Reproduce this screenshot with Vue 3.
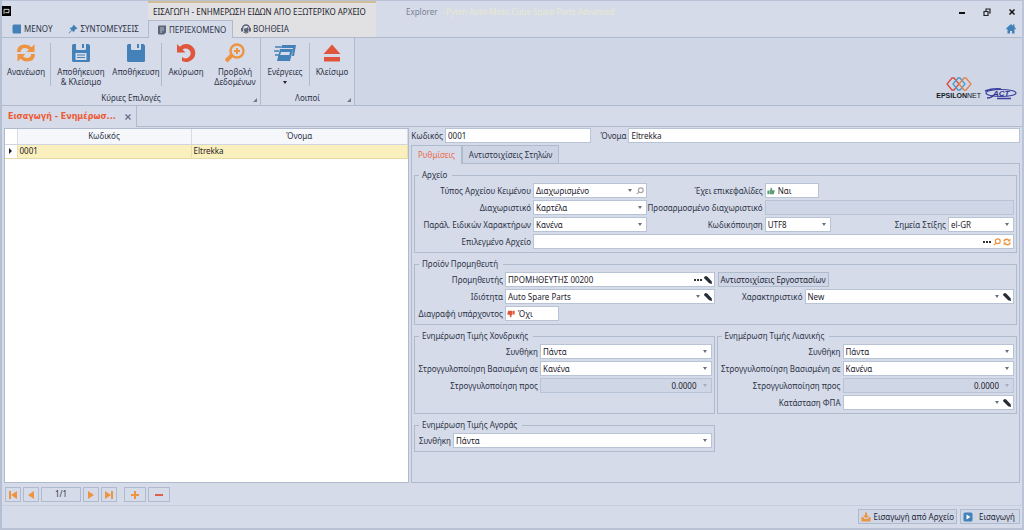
<script setup>
import { h, reactive } from 'vue'

const paths = {
  refresh: ['M1 9Q1 1.500 9 1.500Q13 1.500 15.500 4.200L18.500 1.200V9H10.500L13 6.700Q11.500 5 9 5Q5 5 4.800 9z', 'M19 11Q19 18.500 11 18.500Q7 18.500 4.500 15.800L1.500 18.800V11H9.500L7 13.300Q8.500 15 11 15Q15 15 15.200 11z'],
  disk: ['M1 2.500Q1 1 2.500 1H5v5q0 1 1 1h8q1 0 1-1V1h2.500L19 2.500v15q0 1.500-1.500 1.500h-15Q1 19 1 17.500z', 'M11 1h2v4h-2z'],
  undo: ['M1 1l2.800 2.800A9 9 0 1 1 6 18v-4.200A5 5 0 1 0 6.500 6.500L9.500 9.500H1z'],
  eject: ['M10 1.500l8.500 9.500H1.500z', 'M2 14h16v4.500H2z'],
  home: ['M10 0l10 9-1.500 2L17 9.800V19h-5v-5H8v5H3V9.800L1.500 11 0 9z', 'M14 1h3v5h-3z'],
  pin: ['M11 1l8 8-3 1-3 3-1 4-4-4-6 6-1-1 6-6-4-4 4-1 3-3z'],
  book: ['M4 1h14v18H4q-3 0-3-3V4q0-3 3-3z'],
  pencil: ['M4 0L8 1 19 13l1 7-7-2L1 6 0 3z'],
  thumb: ['M1 9h4v9H1z', 'M6 9l3-3V2q3-1 4 2v4h6v3l-2 7H6z']
}

const Ico = (props) =>
  h('svg', { viewBox: '0 0 20 20', class: 'ico', 'aria-hidden': 'true' },
    paths[props.name].map((d) => h('path', { d, fill: 'currentColor' })))
Ico.props = ['name']

const form = reactive({
  code: '0001',
  name: 'Eltrekka',
  headers: 'Ναι',
  separator: '',
  file: '',
  supplier: 'ΠΡΟΜΗΘΕΥΤΗΣ 00200',
  remove: 'Όχι',
  rounding: '0.0000'
})
</script>

<template>
  <div class="window">
    <header class="top">
      <div class="top-left">
        <div class="title-row">
          <span class="app-icon"><svg viewBox="0 0 11 11"><path d="M2.500 9V3.500h6v4H4" fill="none" stroke="#fff" /></svg></span>
        </div>
        <nav class="tabs first">
          <button class="rtab"><Ico name="book" class="blue" />ΜΕΝΟΥ</button>
          <button class="rtab"><Ico name="pin" class="blue" />ΣΥΝΤΟΜΕΥΣΕΙΣ</button>
        </nav>
      </div>
      <div class="context">
        <div class="title-row ctx-title">ΕΙΣΑΓΩΓΗ - ΕΝΗΜΕΡΩΣΗ ΕΙΔΩΝ ΑΠΟ ΕΞΩΤΕΡΙΚΟ ΑΡΧΕΙΟ</div>
        <nav class="tabs">
          <button class="rtab active">
            <svg class="ico grey" viewBox="0 0 20 20"><path d="M4 1h14v14l-4 4H4q-2 0-2-2V3q0-2 2-2z" fill="currentColor" /><path d="M6 6h8M6 10h8M6 14h4" stroke="#d5dbe9" stroke-width="1.500" /></svg>ΠΕΡΙΕΧΟΜΕΝΟ
          </button>
          <button class="rtab">
            <svg class="ico grey" viewBox="0 0 20 20"><path d="M3 12V9a7 7 0 0 1 14 0v3" fill="none" stroke="currentColor" stroke-width="3" /><path d="M0 8h4v7H0zM16 8h4v7h-4zM6 9q4 1 7-3l2 4v4q-5 6-9 0z" fill="currentColor" /><path d="M5 16q5 5 10 0" fill="none" stroke="currentColor" stroke-width="2" /></svg>ΒΟΗΘΕΙΑ
          </button>
        </nav>
      </div>
      <div class="top-right">
        <div class="title-row app-title">
          <span class="explorer">Explorer</span><span class="product">- Pylon Auto-Moto Cube Spare Parts Advanced</span>
          <span class="wbtns">
            <button aria-label="Ελαχιστοποίηση"><svg viewBox="0 0 8 8"><path d="M1 5h6" stroke="#111" stroke-width="2" /></svg></button>
            <button aria-label="Επαναφορά"><svg viewBox="0 0 8 8"><path d="M3 3V1h4v4H6M1 3.500h4v4H1z" fill="none" stroke="#222" stroke-width="1.200" /></svg></button>
            <button aria-label="Κλείσιμο παραθύρου"><svg viewBox="0 0 8 8"><path d="M1.500 1.500l5 5m0-5l-5 5" stroke="#111" stroke-width="1.500" /></svg></button>
          </span>
        </div>
        <div class="home"><button aria-label="Αρχική"><Ico name="home" class="blue" /></button></div>
      </div>
    </header>

    <section class="ribbon">
      <div class="group">
        <div class="tools">
          <button class="tool w48"><Ico name="refresh" class="orange" /><span>Ανανέωση</span></button>
          <i class="sep"></i>
          <button class="tool w60">
            <svg class="ico blue" viewBox="0 0 20 20"><path d="M1 2.500Q1 1 2.500 1H5v5q0 1 1 1h8q1 0 1-1V1h2.500L19 2.500v15q0 1.500-1.500 1.500h-15Q1 19 1 17.500z" fill="currentColor" /><path d="M11 1h2v4h-2z" fill="currentColor" /><path d="M4.500 10h11v7h-11z" fill="#d5dbe9" /><path d="M6 12h8M6 14.500h8" stroke="currentColor" /></svg>
            <span>Αποθήκευση<br />&amp; Κλείσιμο</span>
          </button>
          <button class="tool w50"><Ico name="disk" class="blue" /><span>Αποθήκευση</span></button>
          <i class="sep"></i>
          <button class="tool w48"><Ico name="undo" class="red" /><span>Ακύρωση</span></button>
          <button class="tool w50">
            <svg class="ico orange" viewBox="0 0 20 20"><circle cx="12" cy="8" r="6.500" fill="none" stroke="currentColor" stroke-width="2.400" /><path d="M12 5v6M9 8h6" stroke="currentColor" stroke-width="2" /><path d="M7 12l-6 6" stroke="currentColor" stroke-width="4" /></svg>
            <span>Προβολή<br />Δεδομένων</span>
          </button>
        </div>
        <div class="caption">Κύριες Επιλογές<i class="corner"></i></div>
      </div>
      <div class="group">
        <div class="tools">
          <button class="tool w48">
            <svg class="ico blue wide" viewBox="0 0 22 20"><path d="M8 2h14l-2 11h-2l1-8H7z" fill="currentColor" /><path d="M6 6h13l-3 12H3z" fill="currentColor" /><path d="M7 9h9l-.800 3h-9z" fill="#d5dbe9" /><path d="M1 4h6M0 8h5M1 12h4" stroke="currentColor" stroke-width="1.500" /></svg>
            <span>Ενέργειες</span><i class="arrow dark"></i>
          </button>
          <i class="sep"></i>
          <button class="tool w44"><Ico name="eject" class="red" /><span>Κλείσιμο</span></button>
        </div>
        <div class="caption">Λοιποί<i class="corner"></i></div>
      </div>
      <div class="brands">
        <div class="epsilon">
          <svg viewBox="0 0 28 14"><g fill="none" stroke-width="1.300"><path d="M7 1h2l5 6-5 6H7L2 7z" stroke="#d94b3c" /><path d="M13 1h2l5 6-5 6h-2L8 7z" stroke="#4a9bd0" /><path d="M19 1h2l5 6-5 6h-2l-5-6z" stroke="#e5824a" /></g></svg>
          <span class="ename"><b>EPSILON</b>NET</span>
        </div>
        <div class="act">
          <svg viewBox="0 0 34 12"><ellipse cx="17" cy="5" rx="15" ry="3.500" fill="none" stroke="#3b3f9e" stroke-width="1.200" /><path d="M1 3q8-3 16-2M3 10q4 0 7-3M13 10.500h14" fill="none" stroke="#3b3f9e" stroke-width="1.500" /></svg>
          <span>ACT</span>
        </div>
      </div>
    </section>

    <nav class="doctabs">
      <div class="doctab"><a href="#">Εισαγωγή - Ενημέρωσ...</a><button aria-label="Κλείσιμο καρτέλας"><svg viewBox="0 0 8 8"><path d="M1.500 1.500l5 5m0-5l-5 5" stroke="#667089" stroke-width="1.300" /></svg></button></div>
      <div class="docrest"></div>
    </nav>

    <main class="content">
      <section class="list">
        <table>
          <thead><tr><th class="mark"></th><th class="code">Κωδικός</th><th>Όνομα</th></tr></thead>
          <tbody><tr><td class="mark"><i class="pointer"></i></td><td>0001</td><td>Eltrekka</td></tr></tbody>
        </table>
      </section>

      <form class="detail" @submit.prevent>
        <div class="ident">
          <label for="code">Κωδικός</label><div class="field"><input id="code" v-model="form.code" /></div>
          <label for="name">Όνομα</label><div class="field"><input id="name" v-model="form.name" /></div>
        </div>
        <div class="subtabs">
          <button type="button" class="subtab on">Ρυθμίσεις</button><button type="button" class="subtab">Αντιστοιχίσεις Στηλών</button><i></i>
        </div>
        <div class="panel">
          <fieldset>
            <legend>Αρχείο</legend>
            <div class="grid file">
              <label for="type">Τύπος Αρχείου Κειμένου</label>
              <div class="field"><select id="type"><option>Διαχωρισμένο</option></select><i class="arrow"></i><svg class="mini lens pale" viewBox="0 0 10 10"><circle cx="6" cy="4" r="3" /><path d="M4 6L1 9" /></svg></div>
              <label for="headers">Έχει επικεφαλίδες</label>
              <div class="field bool"><Ico name="thumb" class="mini green" /><input id="headers" v-model="form.headers" /></div>

              <label for="delimiter">Διαχωριστικό</label>
              <div class="field"><select id="delimiter"><option>Καρτέλα</option></select><i class="arrow"></i></div>
              <label for="custom">Προσαρμοσμένο διαχωριστικό</label>
              <div class="field off"><input id="custom" v-model="form.separator" disabled /></div>

              <label for="special">Παράλ. Ειδικών Χαρακτήρων</label>
              <div class="field"><select id="special"><option>Κανένα</option></select><i class="arrow"></i></div>
              <label for="encoding">Κωδικόποιηση</label>
              <div class="pair">
                <div class="field short"><select id="encoding"><option>UTF8</option></select><i class="arrow"></i></div>
                <label for="culture">Σημεία Στίξης</label>
                <div class="field short"><select id="culture"><option>el-GR</option></select><i class="arrow"></i></div>
              </div>

              <label for="file">Επιλεγμένο Αρχείο</label>
              <div class="field span">
                <input id="file" v-model="form.file" />
                <button type="button" class="inbtn" aria-label="Επιλογή αρχείου"><i class="dots"></i></button>
                <button type="button" class="inbtn" aria-label="Προβολή"><svg class="mini lens orange" viewBox="0 0 10 10"><circle cx="6" cy="4" r="3" /><path d="M4 6L1 9" /></svg></button>
                <button type="button" class="inbtn" aria-label="Ανανέωση αρχείου"><Ico name="refresh" class="mini orange" /></button>
              </div>
            </div>
          </fieldset>

          <fieldset>
            <legend>Προϊόν Προμηθευτή</legend>
            <div class="grid product-grid">
              <label for="supplier">Προμηθευτής</label>
              <div class="field"><input id="supplier" v-model="form.supplier" /><button type="button" class="inbtn" aria-label="Επιλογή"><i class="dots"></i></button><button type="button" class="inbtn" aria-label="Επεξεργασία"><Ico name="pencil" class="mini dark" /></button></div>
              <button type="button" class="plain factories">Αντιστοιχίσεις Εργοστασίων</button>

              <label for="property">Ιδιότητα</label>
              <div class="field"><select id="property"><option>Auto Spare Parts</option></select><i class="arrow"></i><Ico name="pencil" class="mini dark" /></div>
              <label for="feature">Χαρακτηριστικό</label>
              <div class="field"><select id="feature"><option>New</option></select><i class="arrow"></i><Ico name="pencil" class="mini dark" /></div>

              <label for="remove">Διαγραφή υπάρχοντος</label>
              <div class="field bool"><Ico name="thumb" class="mini red down" /><input id="remove" v-model="form.remove" /></div>
            </div>
          </fieldset>

          <div class="prices">
            <fieldset>
              <legend>Ενημέρωση Τιμής Χονδρικής</legend>
              <div class="grid price">
                <label for="w1">Συνθήκη</label><div class="field"><select id="w1"><option>Πάντα</option></select><i class="arrow"></i></div>
                <label for="w2">Στρογγυλοποίηση Βασισμένη σε</label><div class="field"><select id="w2"><option>Κανένα</option></select><i class="arrow"></i></div>
                <label for="w3">Στρογγυλοποίηση προς</label><div class="field off"><input id="w3" class="num" v-model="form.rounding" disabled /><i class="arrow faint"></i></div>
              </div>
            </fieldset>
            <fieldset>
              <legend>Ενημέρωση Τιμής Λιανικής</legend>
              <div class="grid price">
                <label for="r1">Συνθήκη</label><div class="field"><select id="r1"><option>Πάντα</option></select><i class="arrow"></i></div>
                <label for="r2">Στρογγυλοποίηση Βασισμένη σε</label><div class="field"><select id="r2"><option>Κανένα</option></select><i class="arrow"></i></div>
                <label for="r3">Στρογγυλοποίηση προς</label><div class="field off"><input id="r3" class="num" v-model="form.rounding" disabled /><i class="arrow faint"></i></div>
                <label for="r4">Κατάσταση ΦΠΑ</label><div class="field"><select id="r4"><option></option></select><i class="arrow"></i><Ico name="pencil" class="mini dark" /></div>
              </div>
            </fieldset>
            <fieldset>
              <legend>Ενημέρωση Τιμής Αγοράς</legend>
              <div class="grid buy">
                <label for="b1">Συνθήκη</label><div class="field"><select id="b1"><option>Πάντα</option></select><i class="arrow"></i></div>
              </div>
            </fieldset>
          </div>
        </div>
      </form>
    </main>

    <div class="pager">
      <button aria-label="Πρώτη"><svg viewBox="0 0 10 10"><path d="M1 1h2v8H1zM9 1v8L3 5z" /></svg></button>
      <button aria-label="Προηγούμενη"><svg viewBox="0 0 10 10"><path d="M8 1v8L2 5z" /></svg></button>
      <span class="page">1/1</span>
      <button aria-label="Επόμενη"><svg viewBox="0 0 10 10"><path d="M2 1v8l6-4z" /></svg></button>
      <button aria-label="Τελευταία"><svg viewBox="0 0 10 10"><path d="M1 1v8l6-4zM7 1h2v8H7z" /></svg></button>
      <button class="edit start" aria-label="Προσθήκη"><svg viewBox="0 0 10 10"><path d="M4 1h2v3h3v2H6v3H4V6H1V4h3z" /></svg></button>
      <button class="edit minus" aria-label="Αφαίρεση"><svg viewBox="0 0 10 10"><path d="M1 4h8v2H1z" /></svg></button>
    </div>
    <footer class="actions">
      <button class="plain act1"><svg class="ico orange" viewBox="0 0 20 20"><path d="M8 1h4v6h4l-6 6-6-6h4z" fill="currentColor" /><path d="M1 10h3l3 4h6l3-4h3v9H1z" fill="currentColor" /></svg>Εισαγωγή από Αρχείο</button>
      <button class="plain act2"><svg class="ico blue" viewBox="0 0 20 20"><rect x="1" y="1" width="18" height="18" rx="3" fill="currentColor" /><path d="M7 5l8 5-8 5z" fill="#fff" /></svg>Εισαγωγή</button>
    </footer>
  </div>
</template>

<style>
body { background: #d5dbe9; }
</style>

<style scoped>
* { box-sizing: border-box; }
.window {
  --line: #b0bacd;
  min-height: 100vh; display: flex; flex-direction: column;
  border-left: 2px solid #b5bfd2; border-right: 2px solid #bcc5d8; border-bottom: 2px solid #b9c2d5; border-top: 1px solid #b9c2d5;
  background: #d5dbe9; color: #2d3347;
  font: 8px/12px "Noto Sans", "DejaVu Sans Condensed", sans-serif;
}
button, input, select { font: inherit; color: inherit; margin: 0; padding: 0; border: 0; background: none; border-radius: 0; }
i { display: block; flex: none; }
svg { display: block; }
.ico { width: 10px; height: 10px; flex: none; }
.blue { color: #4381b8; } .orange { color: #ee9440; } .red { color: #e0563c; } .grey { color: #5c6578; } .green { color: #5d9c79; } .dark { color: #262b36; }

.top { display: flex; height: 37px; border-bottom: 1px solid var(--line); }
.top-left { width: 146px; display: flex; flex-direction: column; justify-content: space-between; }
.title-row { height: 20px; display: flex; align-items: center; }
.app-icon { width: 9px; height: 10px; background: #000; }
.app-icon svg { width: 9px; height: 10px; }
.tabs { display: flex; height: 17px; }
.first { padding-left: 6px; }
.rtab { display: flex; align-items: center; gap: 2px; padding: 0 4px; white-space: nowrap; }
.first .rtab + .rtab { margin-left: 8px; }
.context { width: 228px; background: #e1e1e3; border-top: 2px solid #d3bd97; display: flex; flex-direction: column; justify-content: space-between; }
.ctx-title { height: 17px; padding-left: 5px; white-space: nowrap; color: #1f222b; }
.context .rtab { padding: 0 8px; }
.context .active { background: #d5dbe9; border: 1px solid var(--line); border-bottom: 0; width: 85px; height: 18px; }
.top-right { flex: 1; display: flex; flex-direction: column; }
.app-title { padding-left: 30px; height: 21px; }
.explorer { color: #7b8190; }
.product { color: #e9e8cf; margin-left: 4px; flex: 1; }
.wbtns { display: flex; gap: 17px; padding-right: 6px; }
.wbtns button, .wbtns svg { width: 8px; height: 8px; }
.home { display: flex; justify-content: flex-end; padding: 2px 6px 0; }

.ribbon { display: flex; background: #cfd6e6; height: 68px; border-bottom: 1px solid var(--line); }
.group { display: flex; flex-direction: column; justify-content: space-between; border-right: 1px solid var(--line); background: #d5dbe9; }
.tools { display: flex; height: 54px; }
.tool { display: flex; flex-direction: column; align-items: center; padding-top: 5px; line-height: 10px; white-space: nowrap; }
.tool .ico { width: 20px; height: 20px; margin-bottom: 4px; }
.tool .wide { width: 22px; }
.w44 { width: 44px; } .w48 { width: 48px; } .w50 { width: 50px; } .w60 { width: 60px; }
.tool .arrow { margin-top: 4px; }
.sep { width: 1px; background: var(--line); margin: 5px 0 6px; }
.caption { position: relative; text-align: center; height: 13px; }
.corner { position: absolute; right: 3px; bottom: 3px; border-left: 4px solid transparent; border-bottom: 4px solid #70798d; }
.brands { margin-left: auto; display: flex; align-items: flex-end; gap: 3px; padding: 0 4px 5px 0; }
.epsilon { display: flex; flex-direction: column; align-items: center; }
.epsilon svg { width: 28px; height: 14px; }
.ename { font: 7px/9px "Liberation Sans", sans-serif; color: #15181f; }
.act { position: relative; width: 34px; height: 12px; }
.act span { position: absolute; left: 9px; top: 1px; font: italic bold 8px/9px "Liberation Sans", sans-serif; color: #2f338f; }

.doctabs { display: flex; height: 21px; }
.doctab { width: 135px; display: flex; align-items: center; justify-content: space-between; padding: 0 4px 0 6px; border-right: 1px solid var(--line); }
.doctab a { color: #ee5a35; font-family: "DejaVu Sans", sans-serif; font-weight: bold; text-decoration: none; white-space: nowrap; }
.doctab button, .doctab svg { width: 8px; height: 8px; }
.docrest { flex: 1; border-bottom: 1px solid var(--line); }

.content { flex: 1; display: grid; grid-template-columns: minmax(0, 405fr) minmax(0, 609fr); gap: 2px; padding: 1px 2px 0; }
.list { background: #fff; border: 1px solid var(--line); }
table { width: 100%; border-collapse: collapse; table-layout: fixed; }
th { font-weight: normal; height: 15px; padding: 0; background: #f6f7fb; border-right: 1px solid #d8dce6; border-bottom: 1px solid #d0d5e0; }
td { height: 14px; padding: 0 2px; background: #faf0bd; border-bottom: 1px solid #e6d9a6; border-right: 1px solid #e8dfae; color: #1f222b; }
.mark { width: 12px; background: #fff; }
.code { width: 174px; }
.pointer { width: 0; margin: auto; border: 3px solid transparent; border-left: 3px solid #1c2029; border-right: 0; }

.detail { display: flex; flex-direction: column; min-width: 0; }
label { text-align: right; white-space: nowrap; padding-right: 2px; }
.ident { display: grid; grid-template-columns: 34px 147fr 37px 393fr; align-items: center; }
.field { display: flex; align-items: center; height: 15px; min-width: 0; background: #fff; border: 1px solid #b9c3d6; padding-right: 2px; gap: 2px; color: #1d212c; }
.field input, .field select { flex: 1; min-width: 0; width: 0; height: 13px; appearance: none; outline: 0; padding: 0 2px; }
.field .num { text-align: right; padding-right: 4px; }
.off { background: #cfd6e5; }
.arrow { width: 4px; height: 3px; border: 2px solid transparent; border-top: 3px solid #6a7080; border-bottom: 0; margin-right: 2px; }
.arrow.dark { border-top-color: #222; margin-right: 0; }
.faint { border-top-color: #a4adbf; }
.mini { width: 8px; height: 8px; flex: none; }
.lens { fill: none; stroke: currentColor; stroke-width: 1.500; }
.pale { color: #a9a5a5; }
.down { transform: rotate(180deg); }
.dots { width: 8px; height: 2px; background: repeating-linear-gradient(90deg, #333 0 2px, transparent 2px 3px); }
.bool { width: 54px; padding: 0 1px; gap: 1px; }
.subtabs { display: flex; height: 19px; margin-top: 2px; }
.subtab { padding: 0 6px; border: 1px solid var(--line); background: #ccd4e4; white-space: nowrap; }
.subtab.on { color: #ee6a4e; background: none; border-bottom: 0; }
.subtabs i { flex: 1; border-bottom: 1px solid var(--line); }
.panel { flex: 1; border: 1px solid var(--line); border-top: 0; padding: 5px 2px; display: flex; flex-direction: column; gap: 5px; }
fieldset { min-width: 0; margin: 0; padding: 2px 2px 3px; border: 1px solid var(--line); }
legend { padding: 0 5px 0 3px; margin-left: 2px; height: 12px; }
.grid { display: grid; row-gap: 2px; align-items: center; }
.file { grid-template-columns: 116px 114fr 118px 250fr; }
.span { grid-column: 2 / -1; }
.pair { display: flex; align-items: center; }
.pair label { margin-left: auto; }
.short { width: 66px; }
.inbtn { display: flex; align-items: center; }
.product-grid { grid-template-columns: 88px 1fr 90px 1fr; }
.factories { grid-column: 3 / -1; justify-self: start; margin-left: 3px; }
.plain { height: 15px; border: 1px solid var(--line); background: #cfd7e7; padding: 0 2px; white-space: nowrap; color: #1f2536; }
.prices { display: grid; grid-template-columns: 1fr 1fr; gap: 5px 2px; }
.price { grid-template-columns: 123px 1fr; }
.buy { grid-template-columns: 36px 1fr; }

.pager { display: flex; height: 23px; padding: 4px 3px; gap: 2px; border-bottom: 1px solid #c6cedd; }
.pager button { width: 16px; height: 15px; border: 1px solid var(--line); display: flex; align-items: center; justify-content: center; }
.pager svg { width: 10px; height: 10px; fill: #ee9440; }
.page { width: 40px; height: 15px; border: 1px solid var(--line); text-align: center; }
.pager .edit { width: 22px; }
.pager .start { margin-left: 5px; }
.pager .minus svg { fill: #e0604a; }
.actions { display: flex; justify-content: flex-end; gap: 3px; padding: 3px 2px 4px; }
.actions .plain { display: flex; align-items: center; gap: 3px; }
.act2 { width: 60px; }
.actions .act2 { gap: 6px; }
</style>
